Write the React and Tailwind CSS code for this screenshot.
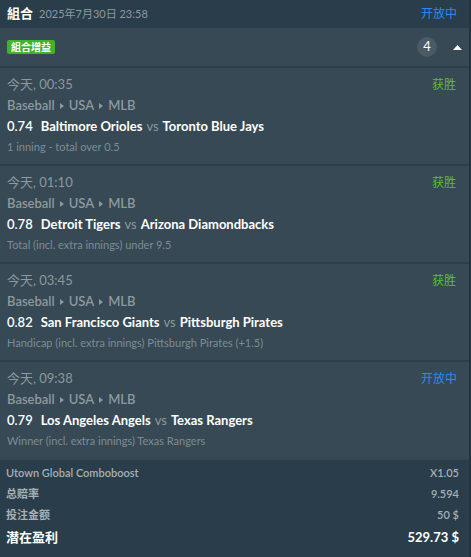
const bets = [
  {
    time: '今天, 00:35',
    odds: '0.74',
    home: 'Baltimore Orioles',
    away: 'Toronto Blue Jays',
    market: '1 inning - total over 0.5',
    status: 'won',
  },
  {
    time: '今天, 01:10',
    odds: '0.78',
    home: 'Detroit Tigers',
    away: 'Arizona Diamondbacks',
    market: 'Total (incl. extra innings) under 9.5',
    status: 'won',
  },
  {
    time: '今天, 03:45',
    odds: '0.82',
    home: 'San Francisco Giants',
    away: 'Pittsburgh Pirates',
    market: 'Handicap (incl. extra innings) Pittsburgh Pirates (+1.5)',
    status: 'won',
  },
  {
    time: '今天, 09:38',
    odds: '0.79',
    home: 'Los Angeles Angels',
    away: 'Texas Rangers',
    market: 'Winner (incl. extra innings) Texas Rangers',
    status: 'open',
  },
];

const font = { fontFamily: 'Lato, "Noto Sans CJK SC", sans-serif' };

function Sep() {
  return (
    <svg className="mx-[5px]" width="4" height="6" viewBox="0 0 4 6">
      <path d="M0 0 L4 3 L0 6 Z" fill="#8d999f" />
    </svg>
  );
}

export default function App() {
  return (
    <div className="w-[471px] h-[557px] bg-[#293d4a] border-r-2 border-[#22343f] overflow-hidden" style={font}>
      {/* Header */}
      <div className="h-[28px] flex items-center px-[7px]">
        <span className="text-white text-[13px] font-bold">組合</span>
        <span className="ml-[6px] text-[11px] text-[#8d999f]">2025年7月30日 23:58</span>
        <span className="ml-auto mr-[5px] text-[12px] text-[#2a8cf0]">开放中</span>
      </div>

      {/* Group header */}
      <div className="h-[38px] bg-[#364954] flex items-center px-[7px]">
        <span className="bg-[#3fb42a] text-white text-[10px] font-bold rounded-[2px] px-[4px] leading-[14px]">組合增益</span>
        <span className="ml-auto w-[20px] h-[20px] rounded-full bg-[#4b5b65] text-white text-[13px] flex items-center justify-center">4</span>
        <svg className="ml-[16px]" width="9" height="5" viewBox="0 0 9 5">
          <path d="M0 5 L4.5 0 L9 5 Z" fill="#fff" />
        </svg>
      </div>

      {/* Bets */}
      {bets.map((b) => (
        <div key={b.time} className="bg-[#364954] border-t-2 border-[#2d3f4a] px-[7px] pt-[6px] pb-[6px]">
          <div className="h-[21px] flex items-center">
            <span className="text-[13px] text-[#8d999f]">{b.time}</span>
            {b.status === 'won' ? (
              <span className="ml-auto mr-[6px] text-[12px] text-[#5cc02a]">获胜</span>
            ) : (
              <span className="ml-auto mr-[5px] text-[12px] text-[#2a8cf0]">开放中</span>
            )}
          </div>
          <div className="h-[21px] flex items-center text-[13px] text-[#8d999f] font-semibold">
            Baseball<Sep />USA<Sep />MLB
          </div>
          <div className="h-[21px] flex items-center text-[13px]">
            <span className="text-white font-semibold">{b.odds}</span>
            <span className="ml-[8px] text-white font-bold">{b.home}</span>
            <span className="mx-[4px] text-[#8d999f]">vs</span>
            <span className="text-white font-bold">{b.away}</span>
          </div>
          <div className="h-[21px] flex items-center text-[11px] text-[#7f8c93]">{b.market}</div>
        </div>
      ))}

      {/* Summary */}
      <div className="border-t-2 border-[#34464f] px-[6px] pt-[3px]">
        <div className="h-[21px] flex items-center text-[11px] text-[#a6b0b5] font-semibold">
          <span>Utown Global Comboboost</span>
          <span className="ml-auto mr-[4px]">X1.05</span>
        </div>
        <div className="h-[21px] flex items-center text-[11px] text-[#a6b0b5] font-semibold">
          <span>总赔率</span>
          <span className="ml-auto mr-[4px]">9.594</span>
        </div>
        <div className="h-[21px] flex items-center text-[11px] text-[#a6b0b5] font-semibold">
          <span>投注金额</span>
          <span className="ml-auto mr-[4px]">50 $</span>
        </div>
        <div className="h-[24px] flex items-center text-[13px] text-white font-bold">
          <span>潜在盈利</span>
          <span className="ml-auto mr-[4px]">529.73 $</span>
        </div>
      </div>
    </div>
  );
}
